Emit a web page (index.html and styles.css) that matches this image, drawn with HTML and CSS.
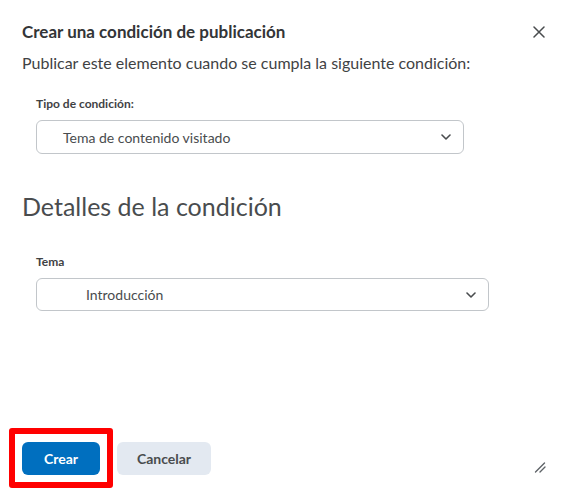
FILE: index.html
```html
<!DOCTYPE html>
<html lang="es">
<head>
<meta charset="utf-8">
<title>Crear una condición de publicación</title>
<link rel="stylesheet" href="styles.css">
</head>
<body>
<div class="dialog">
  <header class="dialog-header">
    <h1 class="dialog-title">Crear una condición de publicación</h1>
    <button class="close-btn" aria-label="Cerrar">
      <svg width="12" height="12" viewBox="0 0 12 12"><path d="M1 1 L11 11 M11 1 L1 11" stroke="#494c4e" stroke-width="1.5" fill="none" stroke-linecap="round"/></svg>
    </button>
  </header>
  <p class="intro">Publicar este elemento cuando se cumpla la siguiente condición:</p>

  <div class="field field-type">
    <label class="field-label">Tipo de condición:</label>
    <div class="select select-type">
      <span class="select-value">Tema de contenido visitado</span>
      <svg class="chevron" width="10" height="6" viewBox="0 0 10 6"><path d="M1 1 L5 5 L9 1" stroke="#494c4e" stroke-width="1.6" fill="none" stroke-linecap="round" stroke-linejoin="round"/></svg>
    </div>
  </div>

  <h2 class="section-title">Detalles de la condición</h2>

  <div class="field field-topic">
    <label class="field-label">Tema</label>
    <div class="select select-topic">
      <span class="select-value">Introducción</span>
      <svg class="chevron" width="10" height="6" viewBox="0 0 10 6"><path d="M1 1 L5 5 L9 1" stroke="#494c4e" stroke-width="1.6" fill="none" stroke-linecap="round" stroke-linejoin="round"/></svg>
    </div>
  </div>

  <footer class="dialog-footer">
    <div class="btn-wrap">
      <button class="btn btn-primary">Crear</button>
      <span class="highlight"></span>
    </div>
    <button class="btn btn-secondary">Cancelar</button>
    <svg class="resize" width="12" height="12" viewBox="0 0 12 12"><path d="M1.5 11 L10.5 2 M6 11 L11 6" stroke="#5f6468" stroke-width="1.4" fill="none" stroke-linecap="round"/></svg>
  </footer>
</div>
</body>
</html>
```

FILE: styles.css
```css
* { box-sizing: border-box; }
html, body { margin: 0; padding: 0; background: #fff; }
body {
  font-family: Lato, "Noto Sans", sans-serif;
  color: #494c4e;
}
.dialog {
  height: 499px;
  display: flex;
  flex-direction: column;
  padding: 21px 18px 24px 22px;
}
.dialog-header {
  display: flex;
  align-items: center;
  justify-content: space-between;
}
.dialog-title {
  margin: 0;
  font-size: 17px;
  line-height: 21px;
  font-weight: 700;
  color: #333537;
}
.close-btn {
  border: 0;
  background: none;
  padding: 0;
  margin-right: 1px;
  width: 12px;
  height: 12px;
  display: flex;
}
.intro {
  margin: 11px 0 0;
  font-size: 16px;
  line-height: 20px;
  color: #3f4244;
}
.field {
  margin-left: 14px;
  display: flex;
  flex-direction: column;
}
.field-type { margin-top: 23px; }
.field-topic { margin-top: 32px; }
.field-label {
  font-size: 12px;
  line-height: 16px;
  font-weight: 700;
  color: #3f4244;
}
.select {
  margin-top: 8px;
  height: 34px;
  border: 1px solid #c2c6ca;
  border-radius: 6px;
  display: flex;
  align-items: center;
  justify-content: space-between;
  font-size: 14px;
  color: #494c4e;
}
.select-type { width: 428px; padding: 0 12px 0 26px; }
.select-topic { width: 453px; padding: 0 12px 0 49px; height: 33px; }
.section-title {
  margin: 36px 0 0;
  font-size: 25px;
  line-height: 32px;
  font-weight: 400;
  color: #494c4e;
}
.dialog-footer {
  margin-top: auto;
  display: flex;
  align-items: flex-end;
  gap: 17px;
}
.btn-wrap { position: relative; display: flex; }
.btn {
  border: 0;
  border-radius: 6px;
  height: 33px;
  font-family: Lato, "Noto Sans", sans-serif;
  font-size: 14px;
  font-weight: 700;
  padding: 0;
}
.btn-primary { width: 78px; background: #006fbf; color: #fff; }
.btn-secondary { width: 94px; background: #e3e9f1; color: #494c4e; }
.highlight {
  position: absolute;
  left: -13px;
  top: -14px;
  right: -13px;
  bottom: -13px;
  border: 6px solid #ff0000;
  border-radius: 3px;
  pointer-events: none;
}
.resize { margin-left: auto; margin-bottom: 2px; }
```
